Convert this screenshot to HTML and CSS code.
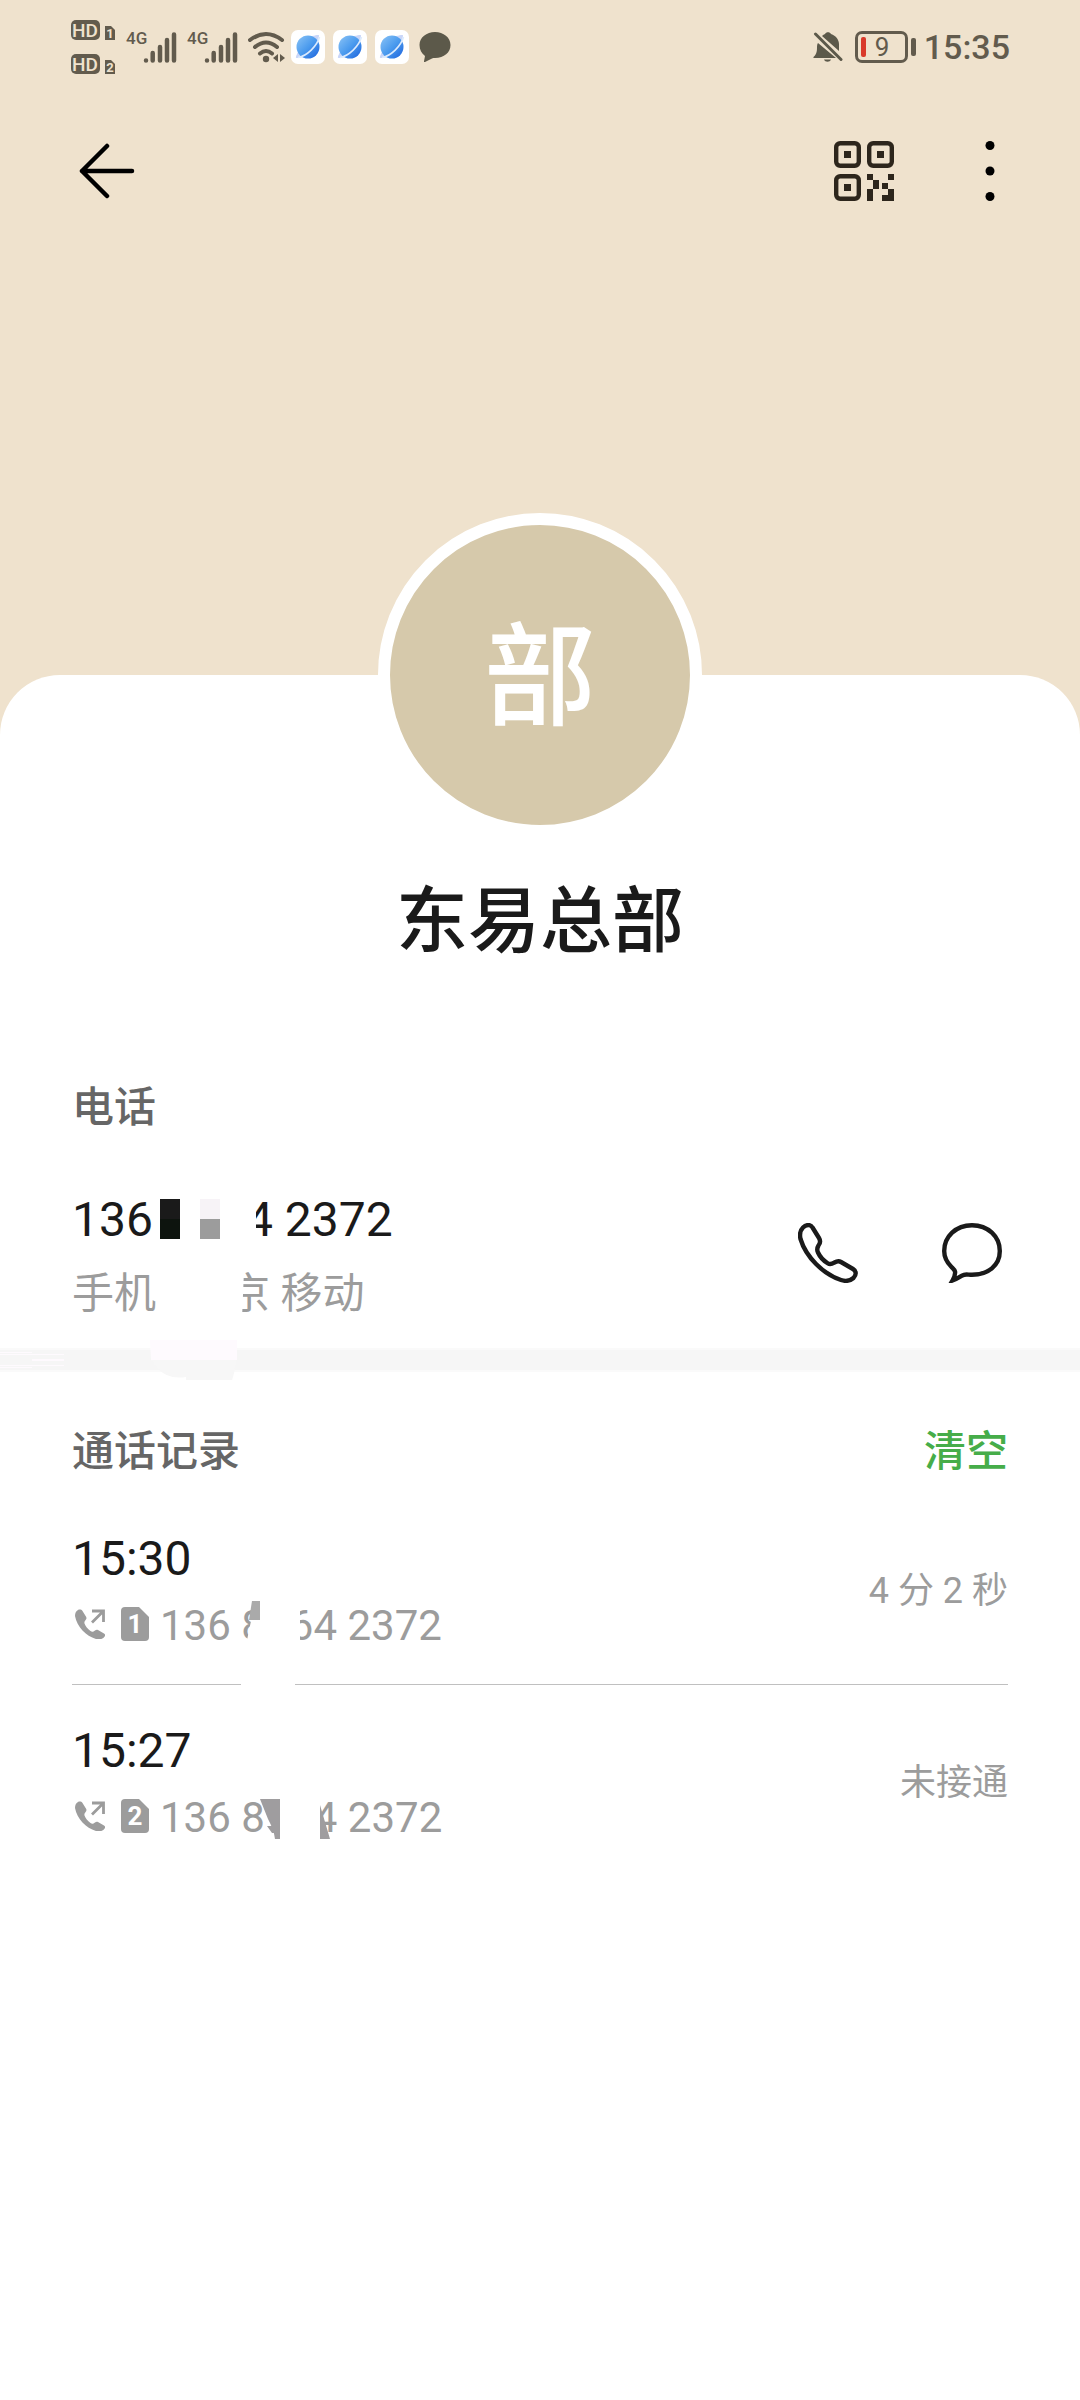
FILE: index.html
```html
<!DOCTYPE html>
<html lang="zh-CN">
<head>
<meta charset="utf-8">
<meta name="viewport" content="width=device-width, initial-scale=1">
<title>东易总部</title>
<link rel="stylesheet" href="styles.css">
</head>
<body>
<svg class="defs" aria-hidden="true">
  <defs>
    <linearGradient id="globe" x1="0" y1="0" x2="1" y2="1">
      <stop offset="0" stop-color="#8cc4f6"/><stop offset=".5" stop-color="#4b9bee"/><stop offset="1" stop-color="#1c62dc"/>
    </linearGradient>
    <symbol id="signal" viewBox="0 0 34 32">
      <path d="M3 29.500v0M9.700 22v7.500M17 16v13.500M24 9v20.500M31 3.500v26" fill="none" stroke="currentColor" stroke-width="4.500" stroke-linecap="round"/>
    </symbol>
    <symbol id="browser" viewBox="0 0 34 34">
      <rect width="34" height="34" rx="7" fill="#fff"/>
      <path d="M5 28C3 24 22 4 27 5c4 2-12 23-22 23z" fill="#c9d6f8"/>
      <path d="M6 28l1-7 6 6zM28 5l-7 1 6 6z" fill="#c9d6f8"/>
      <circle cx="17" cy="17" r="11.500" fill="url(#globe)"/>
      <path d="M7 27.500C16 26 26 16 28.500 7" fill="none" stroke="#dcebfd" stroke-width="1.600"/>
    </symbol>
    <symbol id="outgoing" viewBox="0 0 30 30">
      <path d="M3 1C1 2 0 4 0 7c2 11 11 20 21 23 4 1 7 0 9-3 .500-1 0-2-1-2.500l-6-3.500c-1-.6-2-.3-3 .4l-1.500 1c-1 .6-2 .3-3-.5-3-2-5-5-6-7.500-.3-1 0-2 .6-2.600l1-1.500c.5-.7.5-1.600 0-2.500L7.500 2C6.500.5 4.500.2 3 1z" fill="currentColor"/>
      <path d="M17 2h11.500v11M28 2.500 17 13.500" fill="none" stroke="currentColor" stroke-width="2.800"/>
    </symbol>
    <symbol id="sim" viewBox="0 0 28 34">
      <path d="M4 0h14l10 10v20a4 4 0 0 1-4 4H4a4 4 0 0 1-4-4V4a4 4 0 0 1 4-4z" fill="currentColor"/>
    </symbol>
  </defs>
</svg>

<header class="hero">
  <div class="status">
    <div class="status-group">
      <svg class="hd" width="48" height="56" viewBox="0 0 48 56" aria-hidden="true">
        <g fill="#625b4d">
          <rect x="1" y="1" width="29" height="20" rx="5"/><rect x="1" y="35" width="29" height="20" rx="5"/>
          <path d="M35 7h6l4 4v10H35zM35 41h6l4 4v10H35z"/>
        </g>
        <g class="hd-text"><text x="15" y="18">HD</text><text x="15" y="52">HD</text></g>
        <g class="hd-num"><text x="40" y="19">1</text><text x="40" y="53">2</text></g>
      </svg>
      <span class="cell"><span class="net">4G</span><svg width="34" height="32"><use href="#signal"/></svg></span>
      <span class="cell"><span class="net">4G</span><svg width="34" height="32"><use href="#signal"/></svg></span>
      <svg class="wifi" width="38" height="32" viewBox="0 0 38 32" aria-hidden="true">
        <path d="M2 9q16-12 32 0M7 16q11-9 22 0M12 22.500q6-5 12 0" fill="none" stroke="#625b4d" stroke-width="4" stroke-linecap="round"/>
        <circle cx="18" cy="28" r="3.200" fill="#625b4d"/>
        <path d="M30 23v8l-5-4zM32 23v8l5-4z" fill="#625b4d"/>
      </svg>
      <span class="apps">
        <svg width="34" height="34"><use href="#browser"/></svg>
        <svg width="34" height="34"><use href="#browser"/></svg>
        <svg width="34" height="34"><use href="#browser"/></svg>
      </span>
      <svg width="32" height="32" viewBox="0 0 32 32" aria-hidden="true"><path d="M16 1c8.500 0 15.500 5.500 15.500 13S25 27 16 27c-1.500 0-2 0-3 .5L6 31c-.7.300-1.200 0-1-.8l1-5.200C2.500 22.500.5 18.500.5 14 .5 6.500 7.500 1 16 1z" fill="#5c594a"/></svg>
    </div>
    <div class="status-group status-right">
      <svg width="30" height="32" viewBox="0 0 30 32" aria-hidden="true">
        <path d="M5 12 23 27H1c-.7 0-.8-.8-.3-1.300C4 23 4 19 4 16c0-1.500.3-3 1-4zM9 5c1-1 2-1.500 3-2 1-2.500 5-2.500 6 0 5 1.500 8 6 8 10v7zM11 28.500h7c-1 3-6 3-7 0z" fill="#5c594a"/>
        <path d="M2.500 3 28 28.500" stroke="#5c594a" stroke-width="3" stroke-linecap="round"/>
      </svg>
      <span class="battery"><span class="charge"></span><span class="level">9</span></span>
      <span class="clock">15:35</span>
    </div>
  </div>
  <nav class="appbar">
    <button class="icon-button" type="button" aria-label="返回">
      <svg width="56" height="56" viewBox="0 0 56 56"><path d="M28 3 3 28l25 25M3 28h50" fill="none" stroke="#000" stroke-width="4.500" stroke-linecap="round" stroke-linejoin="round"/></svg>
    </button>
    <div class="appbar-actions">
      <button class="icon-button" type="button" aria-label="二维码">
        <svg width="60" height="60" viewBox="0 0 60 60" fill="#2d261c">
          <g fill="none" stroke="#2d261c" stroke-width="4.400"><rect x="2.200" y="2.200" width="22.600" height="22.600" rx="4"/><rect x="35.200" y="2.200" width="22.600" height="22.600" rx="4"/><rect x="2.200" y="35.200" width="22.600" height="22.600" rx="4"/></g>
          <path d="M10 10h7v7h-7zM43 10h7v7h-7zM10 43h7v7h-7zM33 33h6v6h-6zM39 39h6v9h-6zM54 33h6v6h-6zM48 42h6v6h-6zM33 48h6v12h-6zM54 48h6v12H48v-6h6z"/>
        </svg>
      </button>
      <button class="icon-button" type="button" aria-label="更多">
        <svg width="36" height="60" viewBox="0 0 36 60"><circle cx="18" cy="4.500" r="4.500"/><circle cx="18" cy="30" r="4.500"/><circle cx="18" cy="55.500" r="4.500"/></svg>
      </button>
    </div>
  </nav>
</header>

<main class="sheet">
  <div class="avatar">部</div>
  <h1 class="name">东易总部</h1>

  <section class="section">
    <h2 class="heading">电话</h2>
    <div class="phone-row">
      <div class="phone-info">
        <p class="phone-number masked">136<span class="gap-number"></span>4 2372
          <svg class="mask" width="340" height="64" viewBox="0 0 340 64" aria-hidden="true">
            <path d="M86 5h98v48H86z" fill="#fff"/>
            <path d="M88 11h20v20H88z" fill="#1a1a1a"/><path d="M88 31h20v20H88z" fill="#0d140e"/>
            <path d="M128 11h20v20h-20z" fill="#f7f3f7"/><path d="M128 31h20v20h-20z" fill="#9c9c9c"/>
          </svg>
        </p>
        <p class="phone-place masked">手机<span class="gap-place"></span>京 移动
          <svg class="mask" width="340" height="48" viewBox="0 0 340 48" aria-hidden="true">
            <path d="M86 0h86l-1 25-1 23H86z" fill="#fff"/>
          </svg>
        </p>
      </div>
      <div class="phone-actions">
        <button class="icon-button" type="button" aria-label="拨打电话">
          <svg width="60" height="60" viewBox="0 0 60 60"><path d="M5 4.500C8 1.500 12.500 1 14.500 4.500L21 15c1.500 2.500 1.500 5-.5 7.500-1.500 2.500-2 4-.5 7C22 34 26 38 30 40.500c2.500 1.500 4 .5 6.500-1 2.500-1.500 4-2 6.500-.5L55 46c3.500 2 3.500 6 .5 9-3.500 3-8 3.500-12.500 2C25 51 8 34 2.500 16 1.500 11.500 2 7.500 5 4.500z" fill="none" stroke="#1a1a1a" stroke-width="4.400" stroke-linejoin="round"/></svg>
        </button>
        <button class="icon-button" type="button" aria-label="发送信息">
          <svg width="60" height="60" viewBox="0 0 60 60"><path d="M10.500 57.500c2-3.500 3-6.500 2.500-9-.5-2-2-3-3.500-4.500C5 39.500 2.200 34 2.200 28 2.200 13.500 14 2.200 30 2.200S57.800 13.500 57.800 28 46 51.800 30 51.800c-3.500 0-5.500-.8-8 0C18 53 16 55.500 10.500 57.500z" fill="none" stroke="#1a1a1a" stroke-width="4.400"/></svg>
        </button>
      </div>
    </div>
  </section>

  <div class="divider">
    <svg class="smudge" width="240" height="40" viewBox="0 0 240 40" aria-hidden="true">
      <path d="M0 12h32v1H0zM0 14h64v1H0zM32 19h32v2H32zM0 25h64v1H0zM0 27h32v1H0z" fill="#fefafe"/>
      <path d="M150 0h87v20h-86z" fill="#fefafe"/>
      <path d="M151 20h85q-1 12-4 20h-46v-3q-18 3-29-9z" fill="#f7f7f7"/>
    </svg>
  </div>

  <section class="section">
    <div class="log-head">
      <h2 class="heading">通话记录</h2>
      <button class="clear" type="button">清空</button>
    </div>
    <ul class="calls">
      <li class="call">
        <div>
          <p class="call-time">15:30</p>
          <p class="call-number">
            <svg class="outgoing" width="30" height="30"><use href="#outgoing"/></svg>
            <span class="sim"><svg width="28" height="34"><use href="#sim"/></svg><span class="sim-num">1</span></span>
            <span class="masked">136 8<span class="gap-call"></span>64 2372
              <svg class="mask" width="290" height="50" viewBox="0 0 290 50" aria-hidden="true">
                <path d="M91 0v20l-5 24v6h54V0z" fill="#fff"/>
                <path d="M92 0h8v19H89z" fill="#aaa"/>
              </svg>
            </span>
          </p>
        </div>
        <p class="call-length">4 分 2 秒</p>
        <span class="wipe"></span>
      </li>
      <li class="call">
        <div>
          <p class="call-time">15:27</p>
          <p class="call-number">
            <svg class="outgoing" width="30" height="30"><use href="#outgoing"/></svg>
            <span class="sim"><svg width="28" height="34"><use href="#sim"/></svg><span class="sim-num">2</span></span>
            <span class="masked">136 8<span class="gap-call-wide"></span>4 2372
              <svg class="mask" width="290" height="50" viewBox="0 0 290 50" aria-hidden="true">
                <path d="M120 0h40v50h-40z" fill="#fff"/>
                <path d="M100 6h20v40h-5q-1-9-7-20zM160 12l10 34h-10zM107 33h5l3 7h-3z" fill="#9f9d9f"/>
              </svg>
            </span>
          </p>
        </div>
        <p class="call-length">未接通</p>
      </li>
    </ul>
  </section>
</main>
</body>
</html>
```

FILE: styles.css
```css
* { box-sizing: border-box; }

body {
  margin: 0;
  min-height: 100vh;
  background: #fff;
  color: #1a1a1a;
  font-family: Roboto, "Noto Sans CJK SC", sans-serif;
}

h1, h2, p, ul { margin: 0; padding: 0; font-weight: 400; }
ul { list-style: none; }
svg { display: block; flex: none; }
.defs { position: absolute; width: 0; height: 0; }

button {
  padding: 0;
  border: 0;
  background: none;
  font: inherit;
  color: inherit;
}

/* Header */
.hero {
  height: 740px;
  background: #efe2cd;
}

.status {
  display: flex;
  justify-content: space-between;
  height: 94px;
  padding: 0 70px;
  color: #625b4d;
}

.status-group { display: flex; align-items: center; }
.hd { margin-right: 8px; }
.hd-text, .hd-num { fill: #efe2cd; text-anchor: middle; }
.hd-text { font-size: 19px; font-weight: 500; }
.hd-num { font-size: 13px; font-weight: 700; }

.cell { position: relative; display: flex; width: 61px; padding-left: 17px; }
.net { position: absolute; left: 0; top: -3px; font-size: 17px; line-height: 20px; font-weight: 500; }
.apps { display: flex; gap: 8px; margin: 0 10px 0 5px; }

.status-right { gap: 12px; }
.battery {
  position: relative;
  display: flex;
  align-items: center;
  gap: 9px;
  width: 53px;
  height: 32px;
  padding-left: 3px;
  border: 3px solid #625b4d;
  border-radius: 7px;
  font-size: 26px;
}
.battery::after {
  content: "";
  position: absolute;
  right: -11px;
  top: 4px;
  width: 5px;
  height: 18px;
  border-radius: 2px;
  background: #625b4d;
}
.charge { width: 5px; height: 20px; border-radius: 2px; background: #d93a2b; }
.clock { margin-left: 4px; font-size: 34px; line-height: 44px; font-weight: 500; }

.appbar {
  display: flex;
  justify-content: space-between;
  align-items: center;
  height: 154px;
  padding: 0 72px 0 79px;
}
.appbar-actions { display: flex; gap: 78px; }
.icon-button { display: block; }

/* Contact sheet */
.sheet {
  display: flow-root;
  margin-top: -65px;
  background: #fff;
  border-radius: 60px 60px 0 0;
}

.avatar {
  display: flex;
  align-items: center;
  justify-content: center;
  width: 324px;
  height: 324px;
  margin: -162px auto 0;
  padding-top: 8px;
  border: 12px solid #fff;
  border-radius: 50%;
  background: #d6c9ab;
  color: #fff;
  font-size: 112px;
  font-weight: 500;
  line-height: 292px;
}

.name {
  margin-top: 35px;
  font-size: 72px;
  font-weight: 500;
  line-height: 100px;
  text-align: center;
}

.section { padding: 0 72px; }
.heading { color: #666; font-size: 42px; font-weight: 500; line-height: 60px; }
.section > .heading { margin-top: 106px; }

.phone-row {
  display: flex;
  justify-content: space-between;
  align-items: center;
  padding: 50px 0 30px;
}
.phone-number { font-size: 48px; line-height: 64px; }
.phone-place { margin-top: 18px; color: #9c9c9c; font-size: 42px; line-height: 48px; }
.phone-actions { display: flex; gap: 84px; padding-right: 6px; }

/* Scratched-out digits */
.masked { position: relative; white-space: nowrap; }
.mask { position: absolute; left: 0; top: 0; }
.gap-number, .gap-place, .gap-call, .gap-call-wide { display: inline-block; }
.gap-number { width: 93px; }
.gap-place { width: 72px; }
.gap-call { width: 25px; }
.gap-call-wide { width: 49px; }

.divider {
  position: relative;
  height: 24px;
  border: solid #fafafa;
  border-width: 2px 0;
  background: #f6f6f6;
}
.smudge { position: absolute; left: 0; top: -10px; }

/* Call log */
.log-head {
  display: flex;
  justify-content: space-between;
  align-items: center;
  padding: 50px 0 11px;
}
.clear { color: #46ad49; font-size: 42px; font-weight: 500; line-height: 60px; }

.call {
  position: relative;
  display: flex;
  justify-content: space-between;
  align-items: center;
  padding: 38px 0 33px;
}
.call + .call { border-top: 1px solid #c0c0c0; }
.call-time { font-size: 48px; line-height: 56px; }
.call-number {
  display: flex;
  align-items: center;
  margin-top: 14px;
  color: #9c9c9c;
  font-size: 42px;
  line-height: 50px;
}
.outgoing { margin: 0 16px 4px 3px; }
.sim { position: relative; display: flex; margin: 0 11px 4px 0; }
.sim-num {
  position: absolute;
  inset: 0;
  color: #fff;
  font-size: 26px;
  font-weight: 700;
  line-height: 35px;
  text-align: center;
}
.call-length { color: #9c9c9c; font-size: 36px; line-height: 44px; }
.wipe {
  position: absolute;
  left: 169px;
  bottom: -1px;
  z-index: 1;
  width: 54px;
  height: 2px;
  background: #fff;
}
```
